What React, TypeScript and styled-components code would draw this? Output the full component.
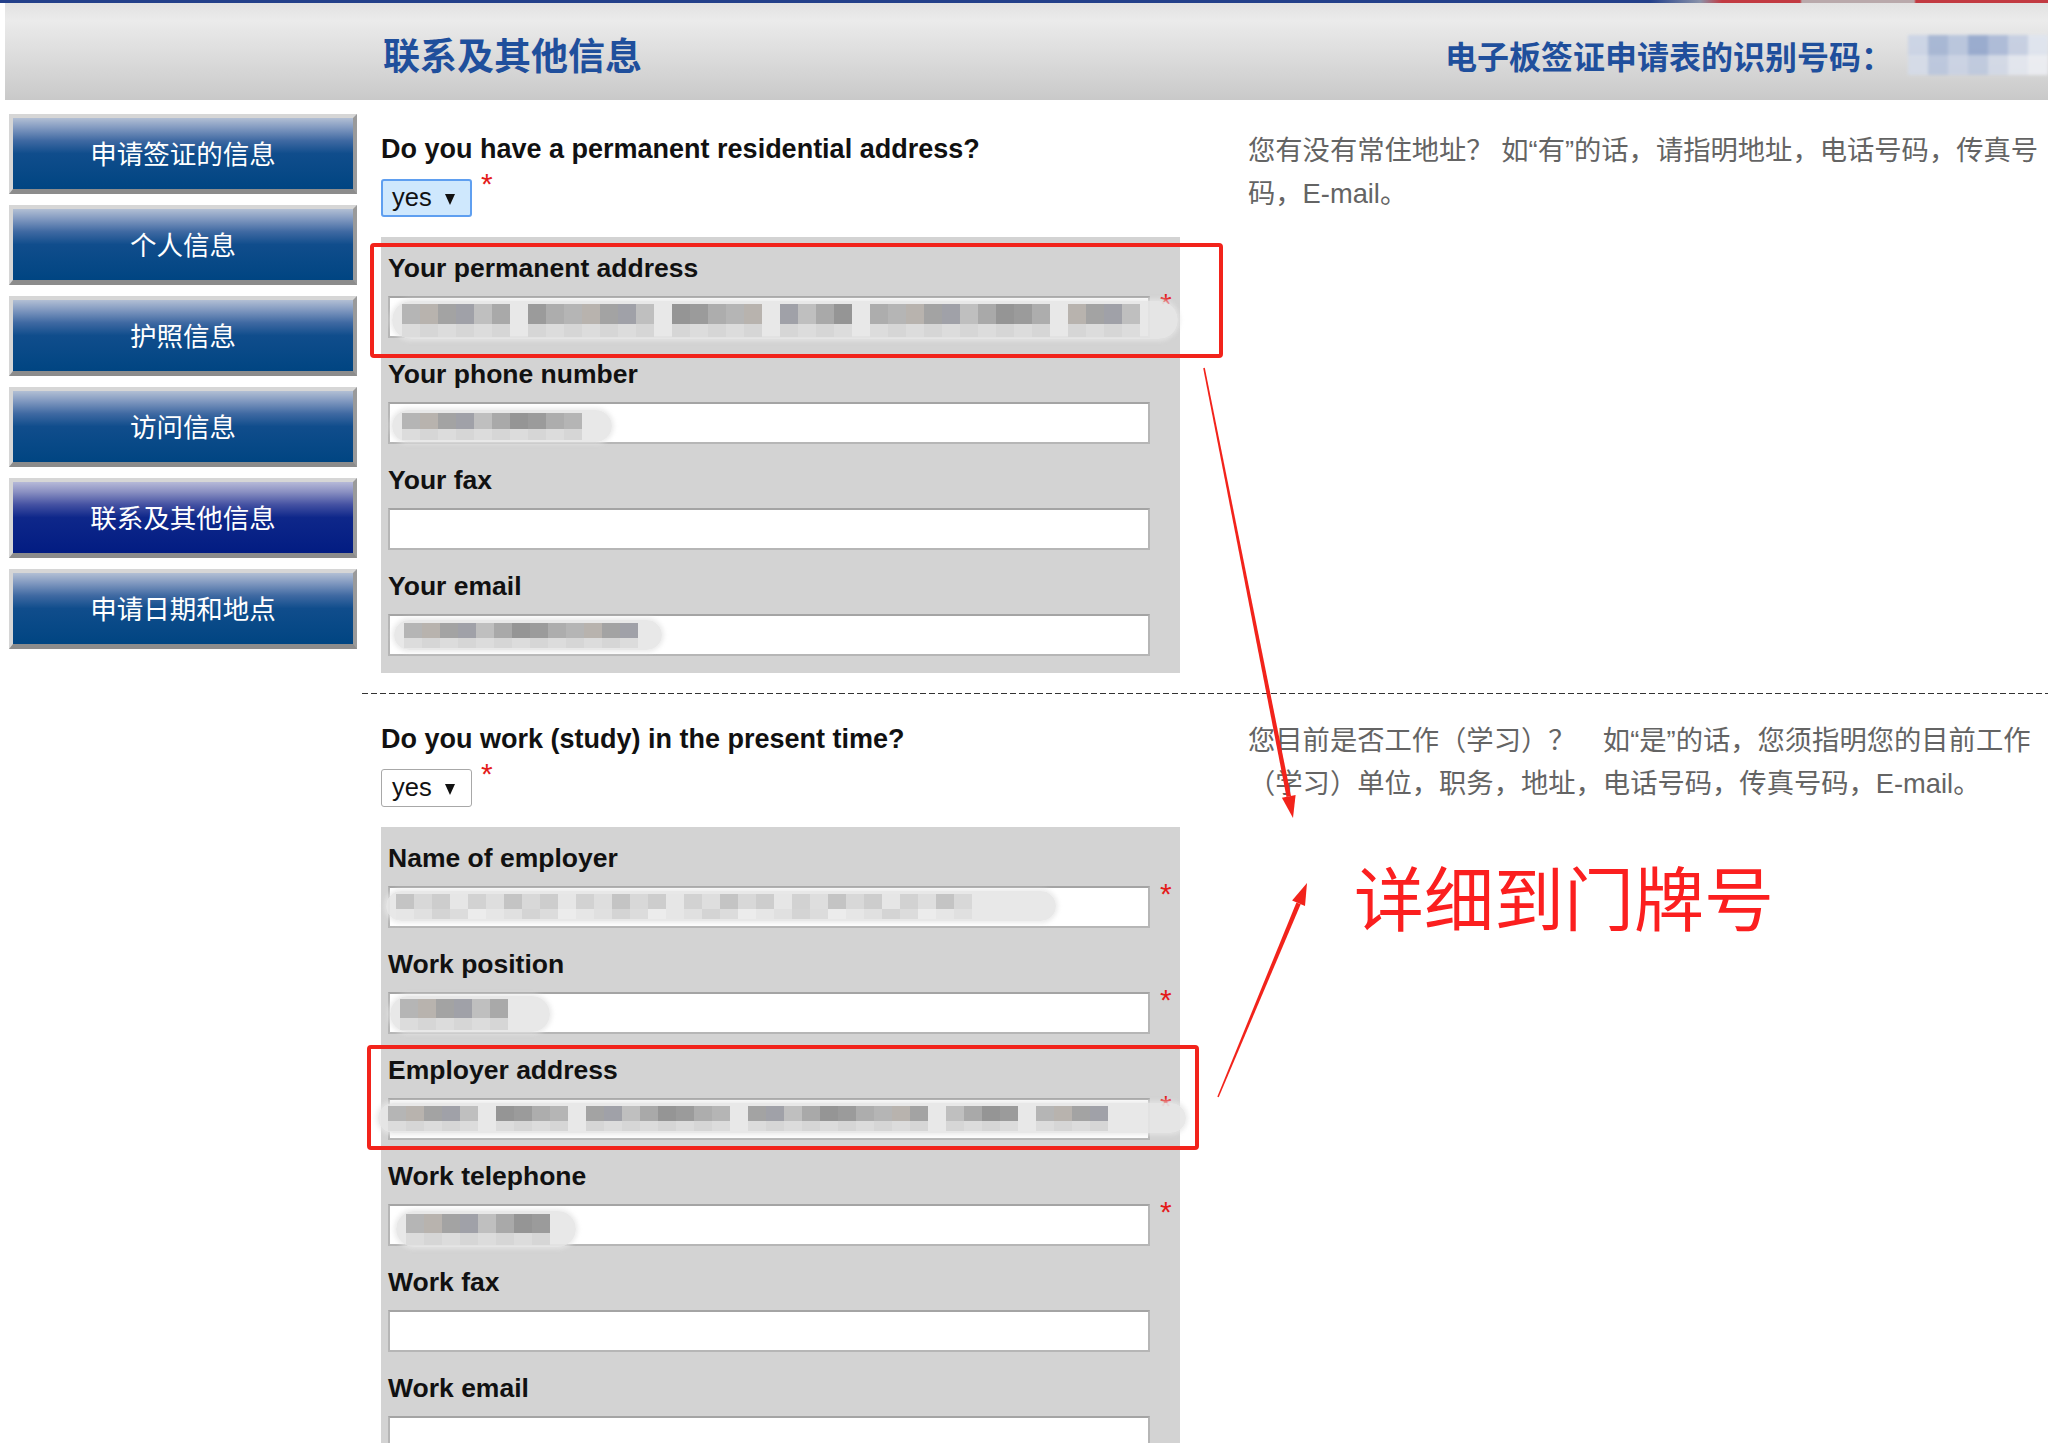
import React from "react";
import styled, { createGlobalStyle } from "styled-components";

const GlobalStyle = createGlobalStyle`
  html, body {
    margin: 0;
    padding: 0;
    background: #fff;
    overflow: hidden;
  }
  body {
    font-family: "Liberation Sans", Arial, "Noto Sans CJK SC", sans-serif;
  }
`;

const Page = styled.div`
  position: relative;
  width: 2048px;
  height: 1443px;
  overflow: hidden;
`;

const TopLine = styled.div`
  height: 3px;
  background: linear-gradient(
    to right,
    #23408a 0,
    #23408a 1650px,
    #8a93aa 1700px,
    #c23a42 1722px,
    #c23a42 1800px,
    #b9a9ab 1802px,
    #b9a9ab 1914px,
    #c23a42 1916px,
    #c23a42 100%
  );
`;

const Header = styled.header`
  margin-left: 5px;
  height: 97px;
  box-sizing: border-box;
  padding-left: 378px;
  display: flex;
  align-items: center;
  background: linear-gradient(to bottom, #e2e2e2 0%, #ebebeb 18%, #dcdcdc 55%, #c9c9c9 100%);
`;

const PageTitle = styled.h1`
  margin: 0;
  font: 700 37px/1 "Noto Sans CJK SC", sans-serif;
  color: #1f4f9c;
  padding-top: 6px;
`;

const FormId = styled.div`
  margin-left: auto;
  display: flex;
  align-items: center;
  gap: 15px;
  font: 700 32px/1 "Noto Sans CJK SC", sans-serif;
  color: #1f4f9c;
  padding-top: 6px;
`;

const IdBlur = styled.div`
  width: 140px;
  height: 40px;
  display: grid;
  grid-template-columns: repeat(7, 1fr);
  grid-template-rows: 1fr 1fr;
  filter: blur(1.5px);
  opacity: 0.85;
`;

const IdCell = styled.div<{ $c: string }>`
  background: ${(p) => p.$c};
`;

const Body = styled.div`
  display: flex;
  align-items: flex-start;
`;

const Sidebar = styled.nav`
  width: 348px;
  margin-left: 9px;
  padding-top: 14px;
  display: flex;
  flex-direction: column;
  gap: 11px;
  flex-shrink: 0;
`;

const NavButton = styled.div<{ $active?: boolean }>`
  height: 80px;
  box-sizing: border-box;
  border-style: solid;
  border-width: 4px 4px 5px 4px;
  border-color: #d6d6d6 #9a9a9a #8c8c8c #d6d6d6;
  display: flex;
  align-items: center;
  justify-content: center;
  color: #fff;
  font: 400 26.5px/1 "Noto Sans CJK SC", sans-serif;
  background: ${(p) =>
    p.$active
      ? "linear-gradient(to bottom, #b6b9d8 0%, #8a90c2 14%, #4451a2 32%, #0e278a 50%, #021c82 100%)"
      : "linear-gradient(to bottom, #b2bfd4 0%, #8199c0 14%, #3f69a2 32%, #104d8c 50%, #004582 100%)"};
`;

const Main = styled.main`
  margin-left: 5px;
  flex: 1;
`;

const Section = styled.section<{ $top: number }>`
  display: grid;
  grid-template-columns: 799px 1fr;
  column-gap: 68px;
  padding-left: 19px;
  padding-top: ${(p) => p.$top}px;
`;

const FormCol = styled.div`
  display: flex;
  flex-direction: column;
`;

const Question = styled.h3`
  margin: 0;
  font: 700 27px/30px "Liberation Sans", Arial, sans-serif;
  color: #111;
`;

const SelectRow = styled.div`
  margin-top: 15px;
  display: flex;
  align-items: flex-start;
`;

const SelectBox = styled.div<{ $focused?: boolean }>`
  width: 91px;
  height: 38px;
  box-sizing: border-box;
  display: flex;
  align-items: center;
  padding-left: ${(p) => (p.$focused ? "9px" : "10px")};
  gap: 13px;
  border-radius: 3px;
  font: 400 25.5px/1 "Liberation Sans", Arial, sans-serif;
  color: #111;
  background: ${(p) => (p.$focused ? "#cfe8fd" : "#fff")};
  border: ${(p) => (p.$focused ? "2px solid #5f9ff0" : "1px solid #a8a8a8")};
`;

const Caret = styled.span`
  width: 0;
  height: 0;
  border-left: 5px solid transparent;
  border-right: 5px solid transparent;
  border-top: 11px solid #111;
  margin-top: 2px;
`;

const Star = styled.span<{ $field?: boolean }>`
  color: #e41b1b;
  font: 400 30px/30px "Liberation Sans", Arial, sans-serif;
  margin-left: ${(p) => (p.$field ? "10px" : "9px")};
  margin-top: ${(p) => (p.$field ? "-7px" : "-10px")};
`;

const Panel = styled.div`
  margin-top: 20px;
  background: #d3d3d3;
  padding: 16px 30px 17px 7px;
  display: flex;
  flex-direction: column;
  gap: 21px;
`;

const Field = styled.div`
  display: flex;
  flex-direction: column;
`;

const Label = styled.label`
  font: 700 26.5px/30px "Liberation Sans", Arial, sans-serif;
  color: #111;
  margin-bottom: 13px;
`;

const InputRow = styled.div`
  display: flex;
  align-items: flex-start;
`;

const InputBox = styled.div`
  position: relative;
  width: 762px;
  height: 42px;
  box-sizing: border-box;
  background: #fff;
  border: 2px solid #b6b6b6;
  border-top-color: #a4a4a4;
  flex-shrink: 0;
`;

const Smear = styled.div<{ $x: number; $y: number; $w: number; $h: number }>`
  position: absolute;
  left: ${(p) => p.$x}px;
  top: ${(p) => p.$y}px;
  width: ${(p) => p.$w}px;
  height: ${(p) => p.$h}px;
  border-radius: ${(p) => p.$h / 2}px;
  background: rgba(230, 230, 230, 0.92);
  box-shadow: 0 0 4px 2px rgba(230, 230, 230, 0.8);
  padding: 3px 0 2px 10px;
  box-sizing: border-box;
  display: flex;
  overflow: hidden;
`;

const CellCol = styled.div`
  flex: 0 0 18px;
  display: flex;
  flex-direction: column;
`;

const Cell = styled.div<{ $c: string; $grow: number }>`
  flex: ${(p) => p.$grow};
  background: ${(p) => p.$c};
`;

const Desc = styled.div`
  margin-top: -5px;
  font: 400 27.3px/43px "Liberation Sans", "Noto Sans CJK SC", sans-serif;
  color: #646464;
  white-space: nowrap;
`;

const DescLine = styled.div``;

const Divider = styled.div`
  margin-top: 20px;
  height: 1px;
  background: repeating-linear-gradient(to right, #333 0 6px, transparent 6px 9px);
`;

const RedBox = styled.div<{ $x: number; $y: number; $w: number; $h: number }>`
  position: absolute;
  left: ${(p) => p.$x}px;
  top: ${(p) => p.$y}px;
  width: ${(p) => p.$w}px;
  height: ${(p) => p.$h}px;
  box-sizing: border-box;
  border: 4px solid #f2231b;
  border-radius: 4px;
  pointer-events: none;
`;

const Note = styled.div`
  position: absolute;
  left: 1354px;
  top: 861px;
  font: 400 70px/1 "Noto Sans CJK SC", sans-serif;
  color: #fb1f1f;
  white-space: nowrap;
`;

const Overlay = styled.svg`
  position: absolute;
  left: 0;
  top: 0;
  pointer-events: none;
`;

const darkTop = ["#a9a9a9", "#9b9b9b", "#b5b5b5", "#a3a3a3", "#bfbfbf", "#959595", "#adadad", "#b8b3ae", "#a0a1a8"];
const darkBottom = ["#d2d2d2", "#dcdcdc", "#c9c9c9", "#e2e2e2", "#d6d6d6", "#cecece"];
const lightTop = ["#cdcdcd", "#d8d8d8", "#c4c4c4", "#dedede", "#d2d2d2", "#e6e6e6"];
const lightBottom = ["#dcdcdc", "#e6e6e6", "#d4d4d4", "#ececec", "#e0e0e0"];

type Redaction = { x: number; y: number; w: number; h: number; pattern: string; light?: boolean };

function Redact({ x, y, w, h, pattern, light }: Redaction) {
  const top = light ? lightTop : darkTop;
  const bottom = light ? lightBottom : darkBottom;
  return (
    <Smear $x={x} $y={y} $w={w} $h={h}>
      {pattern.split("").map((ch, i) => (
        <CellCol key={i}>
          <Cell $grow={3} $c={ch === "-" ? "transparent" : top[(i * 5 + 2) % top.length]} />
          <Cell $grow={2} $c={ch === "-" ? "transparent" : bottom[(i * 3 + 1) % bottom.length]} />
        </CellCol>
      ))}
    </Smear>
  );
}

type FieldData = { label: string; required?: boolean; redact?: Redaction };

const sections: {
  top: number;
  question: string;
  focused?: boolean;
  desc: string[];
  fields: FieldData[];
}[] = [
  {
    top: 34,
    question: "Do you have a permanent residential address?",
    focused: true,
    desc: ["您有没有常住地址？ 如“有”的话，请指明地址，电话号码，传真号", "码，E-mail。"],
    fields: [
      {
        label: "Your permanent address",
        required: true,
        redact: { x: 2, y: 3, w: 786, h: 38, pattern: "xxxxxx-xxxxxxx-xxxxx-xxxx-xxxxxxxxxx-xxxx" },
      },
      { label: "Your phone number", redact: { x: 2, y: 6, w: 220, h: 32, pattern: "xxxxxxxxxx" } },
      { label: "Your fax" },
      { label: "Your email", redact: { x: 4, y: 4, w: 268, h: 30, pattern: "xxxxxxxxxxxxx" } },
    ],
  },
  {
    top: 30,
    question: "Do you work (study) in the present time?",
    desc: ["您目前是否工作（学习）？　如“是”的话，您须指明您的目前工作", "（学习）单位，职务，地址，电话号码，传真号码，E-mail。"],
    fields: [
      {
        label: "Name of employer",
        required: true,
        redact: { x: -4, y: 3, w: 670, h: 30, pattern: "xxxxxxxxxxxxxxxxxxxxxxxxxxxxxxxx", light: true },
      },
      {
        label: "Work position",
        required: true,
        redact: { x: 0, y: 2, w: 160, h: 36, pattern: "xxxxxx-" },
      },
      {
        label: "Employer address",
        required: true,
        redact: { x: -12, y: 3, w: 808, h: 30, pattern: "xxxxx-xxxx-xxxxxxxx-xxxxxxxxxx-xxxx-xxxx" },
      },
      {
        label: "Work telephone",
        required: true,
        redact: { x: 6, y: 5, w: 180, h: 36, pattern: "xxxxxxxx" },
      },
      { label: "Work fax" },
      { label: "Work email" },
    ],
  },
];

const navItems = ["申请签证的信息", "个人信息", "护照信息", "访问信息", "联系及其他信息", "申请日期和地点"];

const idColors = ["#c9d3e6", "#9fb1d2", "#b4c2dc", "#8ea3cb", "#a6b6d6", "#c3cde2", "#dfe5f0", "#d5dcea", "#b8c5de", "#c9d2e5", "#bcc8df", "#d2d9e8", "#e4e8f1", "#eef0f5"];

// tapered arrow: thin tail, thicker shaft near a small triangular head
function arrowPoints(x1: number, y1: number, x2: number, y2: number) {
  const dx = x2 - x1;
  const dy = y2 - y1;
  const len = Math.hypot(dx, dy);
  const ux = dx / len;
  const uy = dy / len;
  const nx = -uy;
  const ny = ux;
  const head = 22;
  const bx = x2 - ux * head;
  const by = y2 - uy * head;
  const shaft = [
    [x1 + nx * 0.8, y1 + ny * 0.8],
    [bx + nx * 2.3, by + ny * 2.3],
    [bx - nx * 2.3, by - ny * 2.3],
    [x1 - nx * 0.8, y1 - ny * 0.8],
  ];
  const tip = [
    [bx + nx * 7, by + ny * 7],
    [x2, y2],
    [bx - nx * 7, by - ny * 7],
  ];
  const fmt = (pts: number[][]) => pts.map((p) => p.map((v) => v.toFixed(1)).join(",")).join(" ");
  return { shaft: fmt(shaft), tip: fmt(tip) };
}

const arrows = [arrowPoints(1204, 368, 1293, 818), arrowPoints(1218, 1097, 1307, 883)];

export default function App() {
  return (
    <Page>
      <GlobalStyle />
      <TopLine />
      <Header>
        <PageTitle>联系及其他信息</PageTitle>
        <FormId>
          电子板签证申请表的识别号码：
          <IdBlur>
            {idColors.map((c, i) => (
              <IdCell key={i} $c={c} />
            ))}
          </IdBlur>
        </FormId>
      </Header>
      <Body>
        <Sidebar>
          {navItems.map((item) => (
            <NavButton key={item} $active={item === "联系及其他信息"}>
              {item}
            </NavButton>
          ))}
        </Sidebar>
        <Main>
          {sections.map((s, si) => (
            <React.Fragment key={s.question}>
              {si > 0 && <Divider />}
              <Section $top={s.top}>
                <FormCol>
                  <Question>{s.question}</Question>
                  <SelectRow>
                    <SelectBox $focused={s.focused}>
                      yes
                      <Caret />
                    </SelectBox>
                    <Star>*</Star>
                  </SelectRow>
                  <Panel>
                    {s.fields.map((f) => (
                      <Field key={f.label}>
                        <Label>{f.label}</Label>
                        <InputRow>
                          <InputBox>{f.redact && <Redact {...f.redact} />}</InputBox>
                          {f.required && <Star $field>*</Star>}
                        </InputRow>
                      </Field>
                    ))}
                  </Panel>
                </FormCol>
                <Desc>
                  {s.desc.map((line) => (
                    <DescLine key={line}>{line}</DescLine>
                  ))}
                </Desc>
              </Section>
            </React.Fragment>
          ))}
        </Main>
      </Body>

      <RedBox $x={370} $y={243} $w={853} $h={115} />
      <RedBox $x={367} $y={1045} $w={832} $h={105} />
      <Overlay width={2048} height={1443}>
        {arrows.map((a, i) => (
          <g key={i} fill="#f2231b">
            <polygon points={a.shaft} />
            <polygon points={a.tip} />
          </g>
        ))}
      </Overlay>
      <Note>详细到门牌号</Note>
    </Page>
  );
}
